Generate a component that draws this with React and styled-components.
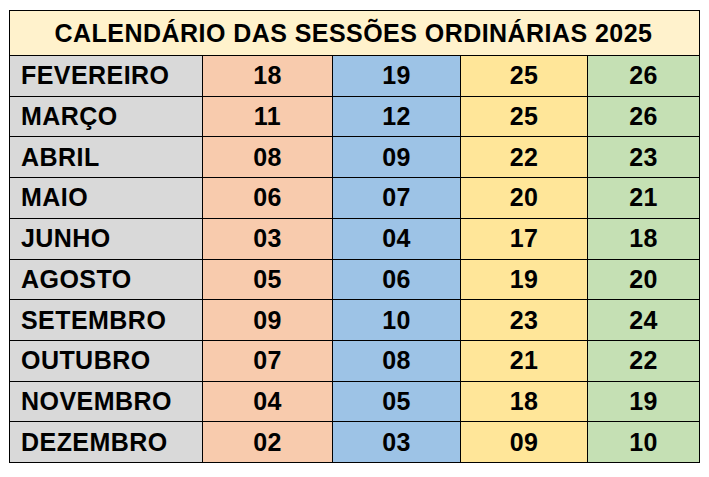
import React from "react";
import styled, { createGlobalStyle } from "styled-components";

const GlobalStyle = createGlobalStyle`
  html, body {
    margin: 0;
    padding: 0;
    background: #ffffff;
  }
  body {
    font-family: "Liberation Sans", Arial, sans-serif;
  }
`;

const columnColors = ["#F8CBAD", "#9DC3E6", "#FFE699", "#C5E0B4"];

const sessions = [
  ["FEVEREIRO", "18", "19", "25", "26"],
  ["MARÇO", "11", "12", "25", "26"],
  ["ABRIL", "08", "09", "22", "23"],
  ["MAIO", "06", "07", "20", "21"],
  ["JUNHO", "03", "04", "17", "18"],
  ["AGOSTO", "05", "06", "19", "20"],
  ["SETEMBRO", "09", "10", "23", "24"],
  ["OUTUBRO", "07", "08", "21", "22"],
  ["NOVEMBRO", "04", "05", "18", "19"],
  ["DEZEMBRO", "02", "03", "09", "10"]
];

const App = () => (
  <Page>
    <GlobalStyle />
    <Table>
      <Title>CALENDÁRIO DAS SESSÕES ORDINÁRIAS 2025</Title>
      {sessions.map(([month, ...days]) => (
        <React.Fragment key={month}>
          <MonthCell>{month}</MonthCell>
          {days.map((day, i) => (
            <DayCell key={i} $bg={columnColors[i]}>
              {day}
            </DayCell>
          ))}
        </React.Fragment>
      ))}
    </Table>
  </Page>
);

const Page = styled.div`
  padding: 10px 0 0 9px;
`;

const Table = styled.div`
  display: grid;
  grid-template-columns: 193px 130px 128px 127px 112px;
  grid-template-rows: 45px repeat(10, 1fr);
  width: 691px;
  height: 453px;
  box-sizing: border-box;
  border-left: 1px solid #000;
  border-top: 1px solid #000;
  color: #000;
  font-weight: bold;
  font-size: 25px;
  letter-spacing: 0.45px;
`;

const Cell = styled.div`
  display: flex;
  align-items: center;
  border-right: 1px solid #000;
  border-bottom: 1px solid #000;
  white-space: nowrap;
`;

const Title = styled(Cell)`
  grid-column: 1 / -1;
  justify-content: center;
  background: #FFF2CC;
  padding-right: 2px;
`;

const MonthCell = styled(Cell)`
  background: #D9D9D9;
  padding-left: 11px;
`;

const DayCell = styled(Cell)`
  justify-content: center;
  background: ${p => p.$bg};
`;

export default App;
